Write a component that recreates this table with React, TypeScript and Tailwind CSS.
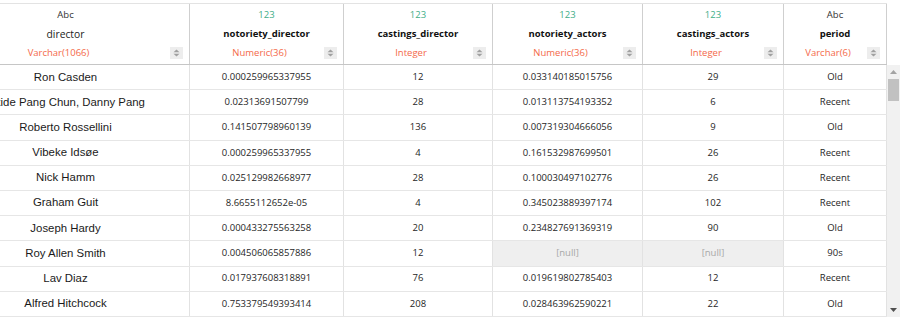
import React from "react";

type Row = {
  director: string;
  nd: string;
  cd: string;
  na: string | null;
  ca: string | null;
  period: string;
};

const rows: Row[] = [
  { director: "Ron Casden", nd: "0.000259965337955", cd: "12", na: "0.033140185015756", ca: "29", period: "Old" },
  { director: "Oxide Pang Chun, Danny Pang", nd: "0.02313691507799", cd: "28", na: "0.013113754193352", ca: "6", period: "Recent" },
  { director: "Roberto Rossellini", nd: "0.141507798960139", cd: "136", na: "0.007319304666056", ca: "9", period: "Old" },
  { director: "Vibeke Idsøe", nd: "0.000259965337955", cd: "4", na: "0.161532987699501", ca: "26", period: "Recent" },
  { director: "Nick Hamm", nd: "0.025129982668977", cd: "28", na: "0.100030497102776", ca: "26", period: "Recent" },
  { director: "Graham Guit", nd: "8.6655112652e-05", cd: "4", na: "0.345023889397174", ca: "102", period: "Recent" },
  { director: "Joseph Hardy", nd: "0.000433275563258", cd: "20", na: "0.234827691369319", ca: "90", period: "Old" },
  { director: "Roy Allen Smith", nd: "0.004506065857886", cd: "12", na: null, ca: null, period: "90s" },
  { director: "Lav Diaz", nd: "0.017937608318891", cd: "76", na: "0.019619802785403", ca: "12", period: "Recent" },
  { director: "Alfred Hitchcock", nd: "0.753379549393414", cd: "208", na: "0.028463962590221", ca: "22", period: "Old" },
];

const widths = ["w-[248px]", "w-[154px]", "w-[149px]", "w-[150px]", "w-[141px]", "w-[103px]"];

type Col = { kind: "Abc" | "123"; name: string; type: string; bold: boolean };
const cols: Col[] = [
  { kind: "Abc", name: "director", type: "Varchar(1066)", bold: false },
  { kind: "123", name: "notoriety_director", type: "Numeric(36)", bold: true },
  { kind: "123", name: "castings_director", type: "Integer", bold: true },
  { kind: "123", name: "notoriety_actors", type: "Numeric(36)", bold: true },
  { kind: "123", name: "castings_actors", type: "Integer", bold: true },
  { kind: "Abc", name: "period", type: "Varchar(6)", bold: true },
];

function SortIcon() {
  return (
    <div className="w-[13px] h-[12px] bg-[#ededed] flex items-center justify-center mr-[6px] shrink-0">
      <svg width="7" height="8" viewBox="0 0 7 8">
        <path d="M3.5 0.5 L6.5 3.3 L0.5 3.3 Z" fill="#a0a0a0" />
        <path d="M3.5 7.5 L6.5 4.7 L0.5 4.7 Z" fill="#a0a0a0" />
      </svg>
    </div>
  );
}

function HeaderCell({ col, w }: { col: Col; w: string }) {
  return (
    <div className={`${w} h-[60px] shrink-0 border-r border-[#cfcfcf] flex flex-col items-stretch pt-[4px]`}>
      <div
        className={`h-[14px] leading-[14px] text-center text-[9.5px] ${
          col.kind === "123" ? "text-[#3fae88]" : "text-[#333333]"
        }`}
      >
        {col.kind}
      </div>
      <div
        className={`mt-[4px] h-[16px] leading-[16px] text-center whitespace-nowrap ${
          col.bold ? "font-bold text-[9.5px] text-[#111111]" : "text-[10.3px] text-[#222222]"
        }`}
      >
        {col.name}
      </div>
      <div className="mt-[3.5px] h-[14px] flex items-center pl-[5px]">
        <div className="flex-1 text-center text-[9.5px] leading-[14px] text-[#f4694a] whitespace-nowrap">{col.type}</div>
        <SortIcon />
      </div>
    </div>
  );
}

function Cell({ w, children, nul, dir }: { w: string; children: React.ReactNode; nul?: boolean; dir?: boolean }) {
  return (
    <div
      className={`${w} h-full shrink-0 border-r border-[#e2e2e2] flex items-center justify-center whitespace-nowrap overflow-visible ${
        nul ? "bg-[#efefef] !text-[#a8a8a8]" : ""
      } ${dir ? "text-[11.4px] text-[#1a1a1a] font-['Liberation_Sans',Arial,sans-serif]" : "text-[9.5px] text-[#262626]"}`}
    >
      {children}
    </div>
  );
}

export default function App() {
  return (
    <div className="w-[900px] h-[328px] bg-white overflow-hidden font-['Open_Sans',sans-serif]">
      <div className="h-[3px]" />
      <div className="flex">
        <div className="w-[887px] overflow-hidden shrink-0">
          <div className="ml-[-58px] w-[945px]">
            <div className="flex border-t border-b border-t-[#e3e3e3] border-b-[#c6c6c6]">
              {cols.map((c, i) => (
                <HeaderCell key={c.name} col={c} w={widths[i]} />
              ))}
            </div>
            {rows.map((r) => (
              <div key={r.director} className="flex h-[25.2px] border-b border-[#e6e6e6]">
                <Cell w={widths[0]} dir>
                  {r.director}
                </Cell>
                <Cell w={widths[1]}>{r.nd}</Cell>
                <Cell w={widths[2]}>{r.cd}</Cell>
                <Cell w={widths[3]} nul={r.na === null}>
                  {r.na ?? "[null]"}
                </Cell>
                <Cell w={widths[4]} nul={r.ca === null}>
                  {r.ca ?? "[null]"}
                </Cell>
                <Cell w={widths[5]}>{r.period}</Cell>
              </div>
            ))}
          </div>
        </div>
        <div className="w-[13px] shrink-0 flex flex-col">
          <div className="h-[62px]" />
          <div className="h-[252px] bg-[#f1f1f1] flex flex-col items-center">
            <div className="h-[14px] flex items-center justify-center">
              <svg width="7" height="4" viewBox="0 0 7 4">
                <path d="M3.5 0 L7 4 L0 4 Z" fill="#a3a3a3" />
              </svg>
            </div>
            <div className="w-[11px] h-[22px] bg-[#c1c1c1]" />
            <div className="flex-1" />
            <div className="h-[14px] flex items-center justify-center">
              <svg width="7" height="4" viewBox="0 0 7 4">
                <path d="M0 0 L7 0 L3.5 4 Z" fill="#505050" />
              </svg>
            </div>
          </div>
        </div>
      </div>
    </div>
  );
}
